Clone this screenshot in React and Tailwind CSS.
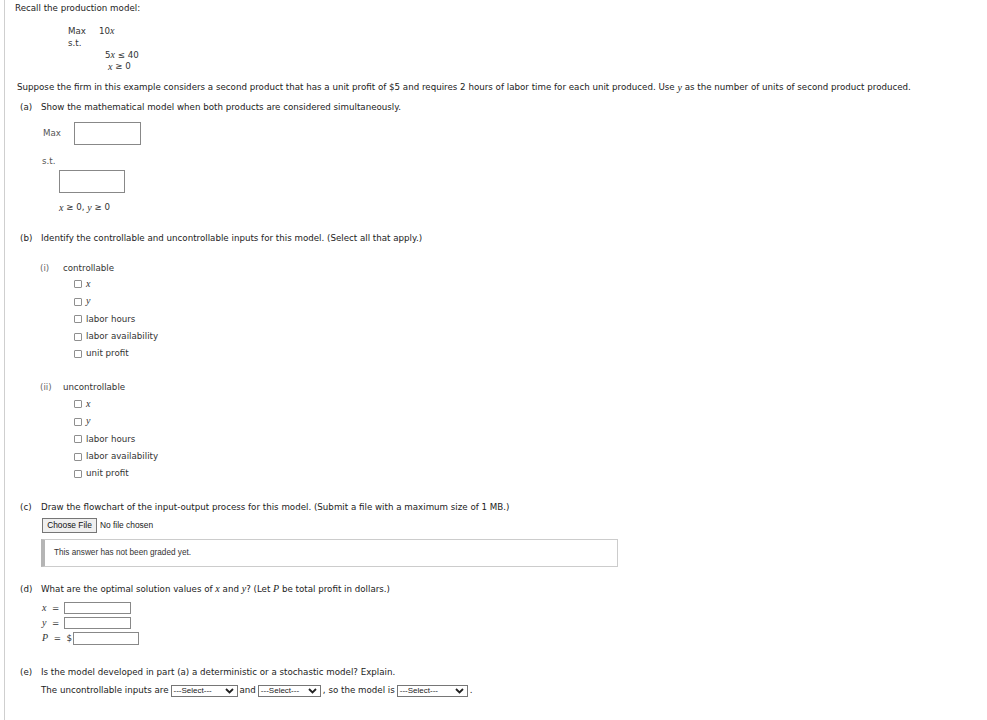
import React from 'react';

const Var = ({ children }) => (
  <span className="text-[10px] italic leading-none" style={{ fontFamily: '"Liberation Serif", serif' }}>{children}</span>
);

const Check = ({ label }) => (
  <div className="flex h-[17.4px] items-center ml-[59px] text-[#333]">
    <span className="mr-[4px] inline-block h-[8px] w-[8px] rounded-[1px] border border-[#8f8f8f] bg-white" />
    <span>{label}</span>
  </div>
);

const Part = ({ tag, className = '', children }) => (
  <div className={`flex h-[12px] items-center ml-[5px] ${className}`}>
    <span className="w-[21px] shrink-0">{tag}</span>
    <span>{children}</span>
  </div>
);

const Chevron = () => (
  <svg width="9" height="6" viewBox="0 0 9 6" className="shrink-0">
    <polyline points="1,1 4.5,4.5 8,1" fill="none" stroke="#222" strokeWidth="1.8" />
  </svg>
);

const Select = ({ w }) => (
  <span
    className={`mx-[2px] inline-flex h-[12px] items-center justify-between border border-[#767676] bg-white pl-[2px] pr-[3px] text-[8px] text-[#222] ${w}`}
    style={{ fontFamily: '"Liberation Sans", Arial, sans-serif' }}
  >
    <span>---Select---</span>
    <Chevron />
  </span>
);

const inputs = ['x', 'y', 'labor hours', 'labor availability', 'unit profit'];

export default function App() {
  return (
    <div
      className="min-h-[720px] w-[987px] bg-white text-[8.7px] text-[#222]"
      style={{ fontFamily: '"DejaVu Sans", Verdana, sans-serif' }}
    >
      <div className="ml-[4px] min-h-[720px] border-l border-[#cfcfcf] pl-[10px] pt-[3px]">
        <div className="flex h-[12px] items-center">Recall the production model:</div>

        <div className="mt-[11px] text-[#333]">
          <div className="flex h-[11.7px] items-center ml-[53px]">
            <span className="w-[31px]">Max</span>
            <span>10<Var>x</Var></span>
          </div>
          <div className="flex h-[11.7px] items-center ml-[53px]">s.t.</div>
          <div className="flex h-[11.7px] items-center ml-[90px]">5<Var>x</Var>&nbsp;≤&nbsp;40</div>
          <div className="flex h-[11.7px] items-center ml-[93px]"><Var>x</Var>&nbsp;≥&nbsp;0</div>
        </div>

        <div className="mt-[9px] flex h-[12px] items-center ml-[2px]">
          Suppose the firm in this example considers a second product that has a unit profit of $5 and requires 2 hours of labor time for each unit produced. Use&nbsp;<Var>y</Var>&nbsp;as the number of units of second product produced.
        </div>

        <Part tag="(a)" className="mt-[8px]">Show the mathematical model when both products are considered simultaneously.</Part>

        <div className="mt-[8px] flex h-[23px] items-center ml-[28px] text-[#555]">
          <span className="w-[31px]">Max</span>
          <span className="h-[23px] w-[67px] border border-[#888] bg-white" />
        </div>
        <div className="mt-[11px] flex h-[12px] items-center ml-[27px] text-[#555]">s.t.</div>
        <div className="mt-[2px] ml-[44px] h-[23px] w-[66px] border border-[#888] bg-white" />
        <div className="mt-[9px] flex h-[12px] items-center ml-[44px] text-[#333]">
          <Var>x</Var>&nbsp;≥&nbsp;0,&nbsp;<Var>y</Var>&nbsp;≥&nbsp;0
        </div>

        <Part tag="(b)" className="mt-[19px]">Identify the controllable and uncontrollable inputs for this model. (Select all that apply.)</Part>

        <div className="mt-[18px] flex h-[12px] items-center ml-[25px] text-[#333]">
          <span className="w-[23px] text-[#666]">(i)</span>
          <span>controllable</span>
        </div>
        <div className="mt-[1px]">
          {inputs.map((l) => (
            <Check key={l} label={l.length === 1 ? <Var>{l}</Var> : l} />
          ))}
        </div>

        <div className="mt-[19px] flex h-[12px] items-center ml-[25px] text-[#333]">
          <span className="w-[23px] text-[#666]">(ii)</span>
          <span>uncontrollable</span>
        </div>
        <div className="mt-[2px]">
          {inputs.map((l) => (
            <Check key={l} label={l.length === 1 ? <Var>{l}</Var> : l} />
          ))}
        </div>

        <Part tag="(c)" className="mt-[19px]">Draw the flowchart of the input-output process for this model. (Submit a file with a maximum size of 1 MB.)</Part>

        <div
          className="mt-[4px] flex h-[15px] items-center ml-[27px] text-[8.4px]"
          style={{ fontFamily: '"Liberation Sans", Arial, sans-serif' }}
        >
          <span className="flex h-[15px] w-[55px] items-center justify-center border border-[#767676] bg-[#efefef] text-[#111]">Choose File</span>
          <span className="ml-[3px] text-[#222]">No file chosen</span>
        </div>

        <div
          className="mt-[6px] ml-[26px] flex h-[28px] w-[577px] items-center border border-l-[4px] border-[#cccccc] border-l-[#b5b5b5] pl-[9px] text-[8.2px] text-[#333]"
          style={{ fontFamily: '"Liberation Sans", Arial, sans-serif' }}
        >
          This answer has not been graded yet.
        </div>

        <Part tag="(d)" className="mt-[17px]">
          What are the optimal solution values of&nbsp;<Var>x</Var>&nbsp;and&nbsp;<Var>y</Var>? (Let&nbsp;<Var>P</Var>&nbsp;be total profit in dollars.)
        </Part>

        <div className="mt-[6px] ml-[27px] flex flex-col gap-[2px] text-[#333]">
          <div className="flex h-[13px] items-center">
            <span className="w-[22px]"><Var>x</Var>&nbsp;&nbsp;=</span>
            <span className="h-[12px] w-[67px] border border-[#888] bg-white" />
          </div>
          <div className="flex h-[13px] items-center">
            <span className="w-[22px]"><Var>y</Var>&nbsp;&nbsp;=</span>
            <span className="h-[12px] w-[67px] border border-[#888] bg-white" />
          </div>
          <div className="flex h-[13px] items-center">
            <span className="w-[31px]"><Var>P</Var>&nbsp;&nbsp;=&nbsp;&nbsp;$</span>
            <span className="h-[13px] w-[66px] border border-[#888] bg-white" />
          </div>
        </div>

        <Part tag="(e)" className="mt-[22px]">Is the model developed in part (a) a deterministic or a stochastic model? Explain.</Part>

        <div className="mt-[6px] ml-[26px] flex h-[12px] items-center">
          <span>The uncontrollable inputs are</span>
          <Select w="w-[67px]" />
          <span>and</span>
          <Select w="w-[63px]" />
          <span>, so the model is</span>
          <Select w="w-[71px]" />
          <span>.</span>
        </div>
      </div>
    </div>
  );
}
